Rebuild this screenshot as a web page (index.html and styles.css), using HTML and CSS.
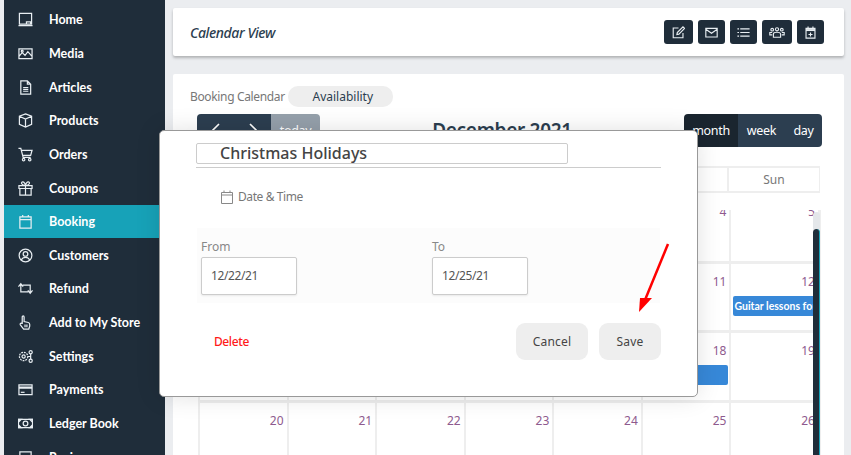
FILE: index.html
```html
<!DOCTYPE html>
<html>
    <head>
        <title>Calendar View</title>
        <link rel="stylesheet" href="styles.css">
    </head>
    <body>
        <div class="sidebar">
            <a class="side-item">
                <svg class="side-icon" viewBox="0 0 16 16"><path d="M1.500 1.500h13v11.500h-13z M9 13v-2.500h4.500v2.500 M0.500 14.500h15"/></svg>
                Home
            </a>
            <a class="side-item">
                <svg class="side-icon" viewBox="0 0 16 16"><path d="M1 3h14v10.500h-14z M1 11l3.500-4 3 3 3-4 4.500 5"/><circle cx="4.500" cy="5.500" r="1"/></svg>
                Media
            </a>
            <a class="side-item">
                <svg class="side-icon" viewBox="0 0 16 16"><path d="M3 1h7l3.500 3.500v10.500h-10.500z M10 1v3.500h3.500 M5.500 8h5.500 M5.500 10h5.500 M5.500 12h5.500"/></svg>
                Articles
            </a>
            <a class="side-item">
                <svg class="side-icon" viewBox="0 0 16 16"><path d="M8 1l6.500 2.500v8.500l-6.500 3-6.500-3v-8.500z M1.500 3.500l6.500 3 6.500-3 M8 6.500v8.500"/></svg>
                Products
            </a>
            <a class="side-item">
                <svg class="side-icon" viewBox="0 0 16 16"><path d="M0.500 1.500h2.500l2.500 9.500h8 M3.500 3.500h11.500l-1.500 5.500h-8.500"/><circle cx="6" cy="13.500" r="1.300"/><circle cx="12.500" cy="13.500" r="1.300"/></svg>
                Orders
            </a>
            <a class="side-item">
                <svg class="side-icon" viewBox="0 0 16 16"><path d="M1 5h14v3h-14z M2 8v7h12v-7 M8 5v10 M8 5c-5-.5-5-4-3-4 1.500 0 3 2 3 4 M8 5c5-.5 5-4 3-4-1.500 0-3 2-3 4"/></svg>
                Coupons
            </a>
            <a class="side-item side-active">
                <svg class="side-icon" viewBox="0 0 16 16"><path d="M2 3h12v12h-12z M2 6h12 M5 1v2.500 M11 1v2.500"/></svg>
                Booking
            </a>
            <a class="side-item">
                <svg class="side-icon" viewBox="0 0 16 16"><circle cx="8" cy="8" r="6.800"/><circle cx="8" cy="6.300" r="2.500"/><path d="M3.500 12.800c1-2 2.500-2.800 4.500-2.800s3.500.8 4.500 2.800"/></svg>
                Customers
            </a>
            <a class="side-item">
                <svg class="side-icon" viewBox="0 0 16 16"><path d="M0.500 6l2.500-3 2.500 3 M3 3v8.500h8 M15.500 10l-2.500 3-2.500-3 M13 13v-8.500h-8"/></svg>
                Refund
            </a>
            <a class="side-item">
                <svg class="side-icon" viewBox="0 0 16 16"><path d="M4.500 9v-7c0-1.300 2-1.300 2 0v5l4.500 1c1 .3 1.500 1 1.500 2v2l-1 3h-5.500l-3.500-4.500c-.8-1.200.6-2.200 1.500-1.500z M7.500 10v3 M9.500 10v3"/></svg>
                Add to My Store
            </a>
            <a class="side-item">
                <svg class="side-icon" viewBox="0 0 16 16"><circle cx="6" cy="8" r="4.500" stroke-dasharray="2 1"/><circle cx="6" cy="8" r="1.700"/><circle cx="13.500" cy="3.500" r="1.700"/><circle cx="13.500" cy="12.500" r="1.700"/><path d="M10.500 8h3v-3 M13.500 8v3"/></svg>
                Settings
            </a>
            <a class="side-item">
                <svg class="side-icon" viewBox="0 0 16 16"><path d="M1 3h14v10.500h-14z"/><path class="thick" d="M1 6h14"/><path d="M3 11h4"/></svg>
                Payments
            </a>
            <a class="side-item">
                <svg class="side-icon" viewBox="0 0 16 16"><path d="M0.500 3.500h15v9h-15z"/><path class="solid" d="M0.500 3.500h3l-3 3z M15.500 3.500h-3l3 3z M0.500 12.500h3l-3-3z M15.500 12.500h-3l3-3z"/><circle cx="8" cy="8" r="2.500"/></svg>
                Ledger Book
            </a>
            <a class="side-item">
                <svg class="side-icon" viewBox="0 0 16 16"><path d="M2 2h12v10h-12z"/></svg>
                Reviews
            </a>
        </div>

        <div class="main">
            <div class="card top-card">
                <div class="page-title">Calendar View</div>
                <div class="top-buttons">
                    <button class="icon-btn btn-edit"><svg class="btn-icon" viewBox="0 0 16 16"><path d="M8 2.500h-6.500v12h12v-6 M6 10.500l.5-2.500 7-7 2 2-7 7z"/></svg></button>
                    <button class="icon-btn btn-mail"><svg class="btn-icon" viewBox="0 0 16 16"><path d="M1 3h14v10.500h-14z M1 4l7 5 7-5"/></svg></button>
                    <button class="icon-btn btn-list"><svg class="btn-icon" viewBox="0 0 16 16"><path d="M4 3.500h11.500 M4 8h11.500 M4 12.500h11.500 M.5 3.500h2 M.5 8h2 M.5 12.500h2"/></svg></button>
                    <button class="icon-btn btn-team"><svg class="btn-icon wide" viewBox="0 0 20 16"><circle cx="10" cy="4" r="2"/><circle cx="4" cy="4.500" r="1.700"/><circle cx="16" cy="4.500" r="1.700"/><path d="M5.500 14v-4c0-3 9-3 9 0v4z M4 8h-3v3h3 M16 8h3v3h-3"/></svg></button>
                    <button class="icon-btn btn-cal"><svg class="btn-icon" viewBox="0 0 16 16"><path d="M2.500 3h11v12h-11z M5 .5v3 M11 .5v3 M8 8v5 M5.500 10.500h5"/><path class="thick" d="M2.500 5h11"/></svg></button>
                </div>
            </div>

            <div class="card cal-card">
                <div class="cal-tabs">
                    <span class="tab-label">Booking Calendar</span>
                    <span class="tab-pill">Availability</span>
                </div>

                <div class="cal-toolbar">
                    <div class="btn-group">
                        <button class="cal-btn nav-btn"><svg class="chevron" viewBox="0 0 8 14"><path d="M7 1L1 7l6 6"/></svg></button>
                        <button class="cal-btn nav-btn"><svg class="chevron" viewBox="0 0 8 14"><path d="M1 1l6 6-6 6"/></svg></button>
                        <button class="cal-btn today-btn">today</button>
                    </div>
                    <h2 class="cal-title">December 2021</h2>
                    <div class="btn-group">
                        <button class="cal-btn view-btn view-active">month</button>
                        <button class="cal-btn view-btn">week</button>
                        <button class="cal-btn view-btn">day</button>
                    </div>
                </div>

                <div class="cal-head">
                    <div class="head-cell">Mon</div>
                    <div class="head-cell">Tue</div>
                    <div class="head-cell">Wed</div>
                    <div class="head-cell">Thu</div>
                    <div class="head-cell">Fri</div>
                    <div class="head-cell">Sat</div>
                    <div class="head-cell">Sun</div>
                </div>

                <div class="cal-scroll">
                    <div class="cal-grid">
                        <div class="day">29</div><div class="day">30</div><div class="day">1</div><div class="day">2</div><div class="day">3</div><div class="day">4</div><div class="day">5</div>
                        <div class="day">6</div><div class="day">7</div><div class="day">8</div><div class="day">9</div><div class="day">10</div><div class="day">11</div>
                        <div class="day">12<div class="event event-right">Guitar lessons for beginners</div></div>
                        <div class="day">13</div><div class="day">14</div><div class="day">15</div><div class="day">16</div><div class="day">17</div>
                        <div class="day">18<div class="event event-left"></div></div>
                        <div class="day">19</div>
                        <div class="day">20</div><div class="day">21</div><div class="day">22</div><div class="day">23</div><div class="day">24</div><div class="day">25</div><div class="day">26</div>
                    </div>
                    <div class="scroll-track"><div class="scroll-thumb"></div></div>
                </div>
            </div>
        </div>

        <div class="modal">
            <div class="modal-title-row">
                <div class="title-input">Christmas Holidays</div>
            </div>
            <div class="date-label">
                <svg class="date-icon" viewBox="0 0 12 14"><path d="M.5 2.500h11v11h-11z M.5 5h11 M3 .5v2.500 M9 .5v2.500"/></svg>
                Date &amp; Time
            </div>
            <div class="date-panel">
                <div class="date-field">
                    <label class="field-label">From</label>
                    <div class="field-input">12/22/21</div>
                </div>
                <div class="date-field">
                    <label class="field-label">To</label>
                    <div class="field-input">12/25/21</div>
                </div>
            </div>
            <div class="modal-foot">
                <span class="delete-link">Delete</span>
                <div class="foot-buttons">
                    <button class="foot-btn cancel-btn">Cancel</button>
                    <button class="foot-btn save-btn">Save</button>
                </div>
            </div>
        </div>

        <svg class="arrow" viewBox="0 0 40 76"><path class="arrow-line" d="M35 2L12 58"/><path class="arrow-head" d="M6 70L7 56 19 56z"/></svg>
    </body>
</html>
```

FILE: styles.css
```css
html, body{
    margin: 0;
    height: 455px;
    overflow: hidden;
}
body{
    display: flex;
    background-color: #EBEDF0;
    font-family: "Noto Sans", sans-serif;
    color: #444;
    font-size: 12px;
}
button{
    font-family: inherit;
    border: none;
    padding: 0;
}

/* sidebar */
.sidebar{
    flex: none;
    width: 161px;
    margin-left: 4px;
    padding-top: 3px;
    background-color: #1F2D3A;
    box-sizing: border-box;
}
.side-item{
    display: flex;
    align-items: center;
    height: 33.65px;
    padding-left: 14px;
    color: #FFF;
    font-family: Lato, sans-serif;
    font-size: 12.500px;
    font-weight: 700;
}
.side-active{
    background-color: #17A2B8;
}
.side-icon{
    flex: none;
    width: 15px;
    height: 15px;
    margin-right: 16px;
    fill: none;
    stroke: #E8EEF2;
    stroke-width: 1.3;
}
.thick{
    stroke-width: 2.400;
}
.solid{
    fill: #E8EEF2;
}

/* main area */
.main{
    flex: 1;
    min-width: 0;
    padding: 8px 7px 0 8px;
}
.card{
    background-color: #FFF;
    border-radius: 2px;
}
.top-card{
    display: flex;
    justify-content: space-between;
    align-items: center;
    height: 48px;
    padding: 0 20px 0 17px;
    margin-bottom: 18px;
    box-shadow: 0 2px 3px rgba(0,0,0,0.25);
}
.page-title{
    font-style: italic;
    font-size: 14px;
    font-weight: 500;
    color: #2C3E50;
    letter-spacing: -0.4px;
}
.top-buttons{
    display: flex;
    gap: 5px;
}
.icon-btn{
    display: flex;
    align-items: center;
    justify-content: center;
    height: 24px;
    background-color: #1F2D3A;
    border-radius: 3px;
}
.btn-edit{ width: 29px; }
.btn-mail{ width: 27px; }
.btn-list{ width: 27px; }
.btn-team{ width: 30px; }
.btn-cal{ width: 27px; }
.btn-icon{
    width: 13px;
    height: 13px;
    fill: none;
    stroke: #E8EEF2;
    stroke-width: 1.4;
}
.wide{
    width: 16px;
}

.cal-card{
    height: 400px;
    padding: 12px 22px 0 17px;
    overflow: hidden;
}
.cal-tabs{
    display: flex;
    align-items: center;
    height: 21px;
}
.tab-label{
    color: #777;
    letter-spacing: -0.35px;
}
.tab-pill{
    display: block;
    width: 100px;
    margin-left: 3px;
    padding-left: 5px;
    text-align: center;
    line-height: 21px;
    background-color: #EEE;
    border-radius: 10px;
    color: #2C3E50;
}
.cal-toolbar{
    display: flex;
    justify-content: space-between;
    align-items: center;
    height: 34px;
    margin: 6px 0 19px 7px;
}
.btn-group{
    display: flex;
}
.cal-btn{
    height: 33px;
    color: #FFF;
    background-color: #2C3E50;
    font-size: 12.500px;
    letter-spacing: -0.3px;
}
.btn-group .cal-btn:first-child{
    border-radius: 4px 0 0 4px;
}
.btn-group .cal-btn:last-child{
    border-radius: 0 4px 4px 0;
}
.nav-btn{
    width: 37px;
}
.chevron{
    display: block;
    width: 8px;
    height: 14px;
    margin: 0 auto;
    fill: none;
    stroke: #FFF;
    stroke-width: 1.6;
}
.today-btn{
    width: 49px;
    background-color: #95A0AB;
}
.cal-title{
    margin: 0;
    font-size: 19px;
    font-weight: 600;
    color: #2C3E50;
    letter-spacing: -0.3px;
}
.view-btn{
    width: 47px;
}
.view-active{
    width: 54px;
    background-color: #1A252F;
}
.view-btn:last-child{
    width: 37px;
}
.cal-head{
    display: grid;
    grid-template-columns: repeat(6, minmax(0, 1fr)) 92px;
    margin-left: 7px;
    margin-right: 2px;
}
.head-cell{
    height: 23px;
    line-height: 23px;
    border: 2px solid #EEE;
    border-left-width: 1px;
    border-right-width: 1px;
    text-align: center;
    color: #777;
}
.cal-scroll{
    position: relative;
    height: 300px;
    margin: 17px 1px 0 7px;
    border-right: 1px solid #EEE;
    overflow: hidden;
}
.cal-grid{
    display: grid;
    grid-template-columns: repeat(7, minmax(0, 1fr));
    grid-auto-rows: 69.700px;
    margin: -16px 0 0 1px;
    border-left: 2px solid #EEE;
}
.day{
    min-width: 0;
    border-right: 2px solid #EEE;
    border-bottom: 3px solid #EEE;
    padding: 9px 3px 0 0;
    text-align: right;
    color: #8E5A8E;
    line-height: 17px;
}
.event{
    height: 20px;
    margin-top: 6px;
    background-color: #3788D8;
    color: #FFF;
    font-family: Lato, sans-serif;
    font-size: 10.500px;
    font-weight: 700;
    line-height: 20px;
    text-align: left;
    white-space: nowrap;
    overflow: hidden;
}
.event-right{
    margin-left: 2px;
    margin-right: -5px;
    padding-left: 1px;
    border-radius: 2px 0 0 2px;
}
.event-left{
    margin-right: -2px;
    border-radius: 0 2px 2px 0;
}
.scroll-track{
    position: absolute;
    top: 2px;
    right: 0;
    width: 7px;
    height: 298px;
    background-color: #E4E7EA;
    border-radius: 4px;
}
.scroll-thumb{
    height: 280px;
    margin-top: 17px;
    background-color: #1F2D3A;
    border-right: 1px solid #17A2B8;
    border-radius: 4px;
    box-sizing: border-box;
}

/* booking popup */
.modal{
    position: absolute;
    left: 159px;
    top: 130px;
    width: 537px;
    height: 265px;
    background-color: #FFF;
    border: 1px solid #999;
    border-radius: 5px;
    box-shadow: 0 0 24px rgba(0,0,0,0.12);
}
.modal-title-row{
    margin: 12px 36px 0;
    padding-bottom: 3px;
    border-bottom: 1px solid #CCC;
}
.title-input{
    width: 347px;
    height: 19px;
    padding-left: 23px;
    border: 1px solid #CCC;
    border-radius: 2px;
    font-size: 16px;
    line-height: 18px;
    font-weight: 500;
    color: #444;
}
.date-label{
    display: flex;
    align-items: center;
    margin: 20px 0 0 61px;
    height: 17px;
    color: #777;
    letter-spacing: -0.4px;
}
.date-icon{
    width: 12px;
    height: 14px;
    margin-right: 5px;
    fill: none;
    stroke: #888;
}
.date-panel{
    display: flex;
    margin: 23px 37px 0;
    height: 75px;
    padding-top: 10px;
    padding-left: 4px;
    box-sizing: border-box;
    background-color: #FCFCFC;
}
.date-field{
    flex: none;
    width: 231px;
}
.field-label{
    display: block;
    color: #888;
    line-height: 17px;
    margin-bottom: 2px;
}
.field-input{
    width: 85px;
    height: 36px;
    padding-left: 9px;
    border: 1px solid #CCC;
    border-radius: 2px;
    background-color: #FFF;
    line-height: 36px;
    color: #555;
    letter-spacing: -0.4px;
    box-shadow: 0 1px 2px rgba(0,0,0,0.08);
}
.modal-foot{
    display: flex;
    justify-content: space-between;
    align-items: center;
    margin: 20px 36px 0 54px;
}
.delete-link{
    color: #FF1A1A;
    font-weight: 500;
    letter-spacing: -0.4px;
}
.foot-buttons{
    display: flex;
    gap: 11px;
}
.foot-btn{
    height: 37px;
    background-color: #EEE;
    border-radius: 9px;
    color: #444;
    font-size: 12px;
    letter-spacing: 0.2px;
}
.cancel-btn{
    width: 72px;
}
.save-btn{
    width: 62px;
}
.arrow{
    position: absolute;
    left: 633px;
    top: 242px;
    width: 40px;
    height: 76px;
}
.arrow-line{
    stroke: #FF0000;
    stroke-width: 2.500;
    fill: none;
}
.arrow-head{
    fill: #FF0000;
}
```
